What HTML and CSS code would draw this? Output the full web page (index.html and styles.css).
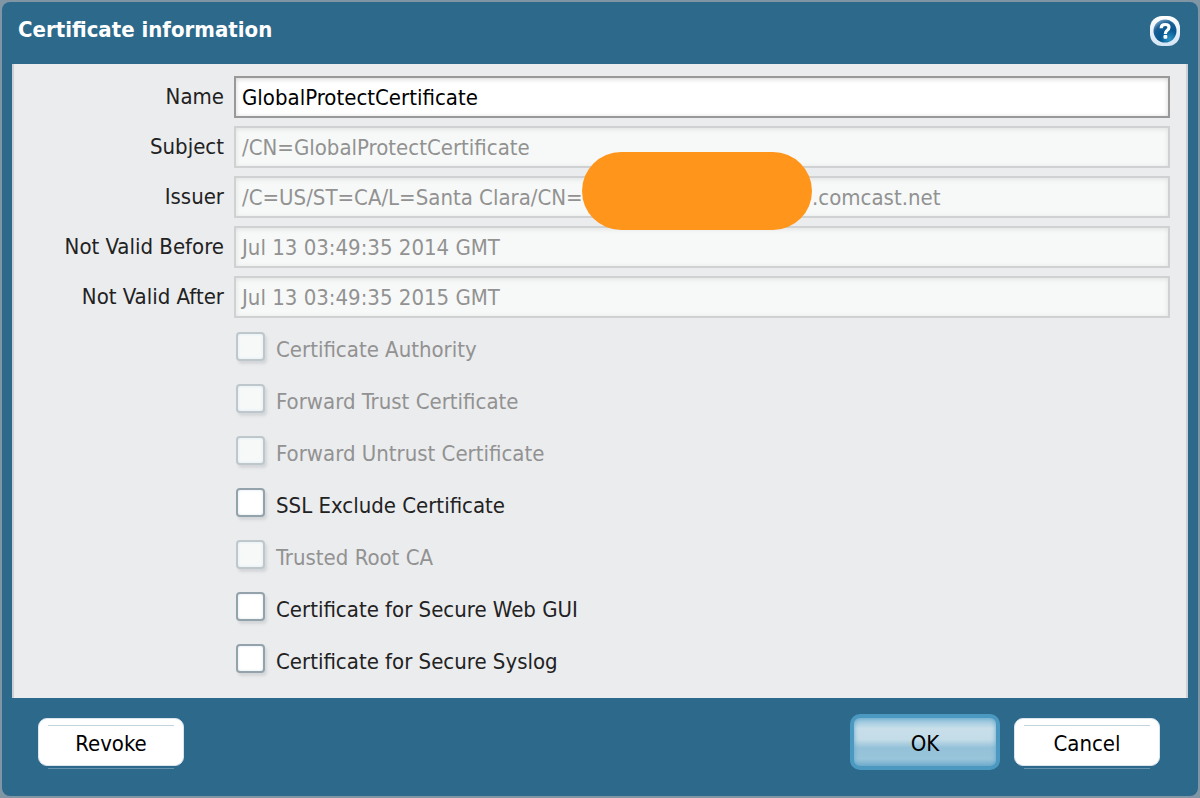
FILE: index.html
```
<!DOCTYPE html>
<html lang="en">
<head>
<meta charset="utf-8">
<title>Certificate information</title>
<link rel="stylesheet" href="styles.css">
</head>
<body>
<form class="dialog">
  <header class="header">
    <h1 class="title">Certificate information</h1>
    <button class="help" type="button" aria-label="Help">
      <svg width="30" height="30" viewBox="0 0 30 30" aria-hidden="true">
        <defs>
          <linearGradient id="ring" x1="0" y1="0" x2="0" y2="1"><stop offset="0" stop-color="#ffffff"/><stop offset="1" stop-color="#d3e4f4"/></linearGradient>
          <radialGradient id="ball" cx=".7" cy=".85" r=".9"><stop offset="0" stop-color="#2a94c4"/><stop offset=".45" stop-color="#07578f"/><stop offset=".8" stop-color="#1b5f95"/><stop offset="1" stop-color="#6f9dc0"/></radialGradient>
        </defs>
        <rect width="30" height="30" rx="12" fill="url(#ring)"/>
        <circle cx="15" cy="15" r="11.5" fill="url(#ball)"/>
        <path d="M11.200 12.200Q11.200 8.500 15.200 8.500Q19 8.500 19 11.300Q19 13.200 17 14.500Q15.300 15.700 15.300 18" fill="none" stroke="#fff" stroke-width="3.200"/>
        <rect x="13.500" y="19" width="3.800" height="3.800" rx="1" fill="#fff"/>
      </svg>
    </button>
  </header>
  <main class="content">
    <div class="fields">
      <label class="label" for="name">Name</label>
      <input class="field" id="name" type="text" value="GlobalProtectCertificate">
      <label class="label" for="subject">Subject</label>
      <input class="field" id="subject" type="text" value="/CN=GlobalProtectCertificate" disabled>
      <label class="label" for="issuer">Issuer</label>
      <div class="issuer">
        <input class="field" id="issuer" type="text" value="/C=US/ST=CA/L=Santa Clara/CN=" disabled>
        <span class="domain">.comcast.net</span>
        <span class="redaction"></span>
      </div>
      <label class="label" for="before">Not Valid Before</label>
      <input class="field" id="before" type="text" value="Jul 13 03:49:35 2014 GMT" disabled>
      <label class="label" for="after">Not Valid After</label>
      <input class="field" id="after" type="text" value="Jul 13 03:49:35 2015 GMT" disabled>
    </div>
    <div class="options">
      <label class="option off"><input class="check" type="checkbox" disabled><span>Certificate Authority</span></label>
      <label class="option off"><input class="check" type="checkbox" disabled><span>Forward Trust Certificate</span></label>
      <label class="option off"><input class="check" type="checkbox" disabled><span>Forward Untrust Certificate</span></label>
      <label class="option"><input class="check" type="checkbox"><span>SSL Exclude Certificate</span></label>
      <label class="option off"><input class="check" type="checkbox" disabled><span>Trusted Root CA</span></label>
      <label class="option"><input class="check" type="checkbox"><span>Certificate for Secure Web GUI</span></label>
      <label class="option"><input class="check" type="checkbox"><span>Certificate for Secure Syslog</span></label>
    </div>
  </main>
  <footer class="footer">
    <button class="button" type="button">Revoke</button>
    <div class="actions">
      <button class="button primary" type="submit">OK</button>
      <button class="button" type="button">Cancel</button>
    </div>
  </footer>
</form>
</body>
</html>
```
FILE: styles.css
```
* { box-sizing: border-box; }
body {
  margin: 0;
  background: #8196a5;
  color: #222;
  font: 22px/26px "DejaVu Sans Condensed", Tahoma, "DejaVu Sans", sans-serif;
}
button, input { font: inherit; }
.dialog {
  margin: 2px;
  padding: 0 10px;
  border-radius: 8px;
  background: #2d698b;
}
.header {
  display: flex;
  align-items: center;
  justify-content: space-between;
  height: 62px;
  padding: 0 8px 4px 6px;
}
.title {
  margin: 0;
  padding-bottom: 2px;
  color: #fff;
  font-size: 22px;
  font-weight: bold;
}
.help {
  display: flex;
  padding: 0;
  border: 0;
  background: none;
}
.content {
  padding: 12px 16px 10px 0;
  border: solid #cbd0d4;
  border-width: 0 2px;
  background: #ebecee;
}
.fields {
  display: grid;
  grid-template-columns: 210px 1fr;
  gap: 8px 10px;
}
.label {
  padding-top: 8px;
  text-align: right;
}
.field {
  display: block;
  width: 100%;
  height: 42px;
  padding: 0 4px;
  border: 2px solid #999;
  border-radius: 0;
  background: #fff;
  box-shadow: inset 0 1px 5px #d5d5d5;
  color: #000;
  text-indent: 2px;
}
.field:disabled {
  border-color: #cfd1d2;
  background: #f7f9f8;
  box-shadow: inset 0 1px 5px #dfe1e1;
  color: #929292;
}
.issuer { position: relative; }
.domain {
  position: absolute;
  top: 9px;
  left: 578px;
  color: #929292;
}
.redaction {
  position: absolute;
  top: -24px;
  left: 348px;
  width: 230px;
  height: 78px;
  border-radius: 39px;
  background: #ff951b;
}
.options {
  display: grid;
  justify-items: start;
  padding: 6px 0 0 222px;
}
.option {
  display: flex;
  align-items: center;
  gap: 11px;
  height: 52px;
}
.off { color: #929292; }
.check {
  appearance: none;
  width: 29px;
  height: 29px;
  margin: 0 0 8px;
  border: 2px solid #93a2ab;
  border-radius: 4px;
  background: #fff;
  box-shadow: 2px 3px 3px #d3d6d8, inset 0 0 3px #dce8ee;
}
.check:disabled {
  border-color: #bdc7cc;
  background: #f7f9f9;
}
.footer {
  display: flex;
  align-items: center;
  justify-content: space-between;
  height: 98px;
  padding: 0 28px 10px 26px;
}
.actions {
  display: flex;
  align-items: center;
  gap: 14px;
}
.button {
  width: 146px;
  height: 48px;
  padding: 4px 0 0;
  border: 1px solid #d9e5ec;
  border-radius: 9px;
  background:
    linear-gradient(#c4d4de, #c4d4de) center 6px / 126px 1px no-repeat,
    #fff;
  box-shadow: 0 12px 0 -10px #2d698b, 0 13px 0 -10px #6793ac;
  color: #000;
}
.primary {
  width: 150px;
  height: 56px;
  border: 4px solid #4b99c1;
  border-radius: 10px;
  background: linear-gradient(#8fc0da, #c8dfea 22%, #c3dce8 45%, #94c1d8 62%, #99c5da 85%, #78b0cd);
  box-shadow: inset 0 0 5px #62a7ca;
}
```
